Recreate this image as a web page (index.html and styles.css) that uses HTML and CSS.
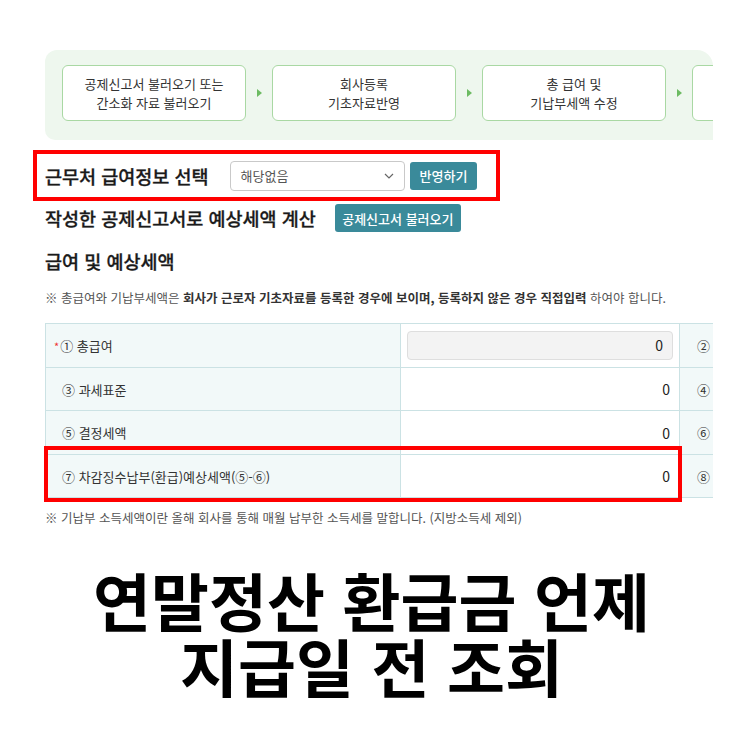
FILE: index.html
```html
<!DOCTYPE html>
<html lang="ko">
<head>
    <meta charset="UTF-8">
    <meta name="viewport" content="width=device-width, initial-scale=1.0">
    <title>연말정산 환급금 언제 지급일 전 조회</title>
    <link rel="stylesheet" href="styles.css">
</head>
<body>
    <div class="shot">
        <div class="steps-wrap">
            <div class="steps">
                <div class="step">공제신고서 불러오기 또는<br>간소화 자료 불러오기</div>
                <span class="arrow"></span>
                <div class="step">회사등록<br>기초자료반영</div>
                <span class="arrow"></span>
                <div class="step">총 급여 및<br>기납부세액 수정</div>
                <span class="arrow"></span>
                <div class="step"></div>
            </div>
        </div>

        <div class="pick">
            <h2 class="heading">근무처 급여정보 선택</h2>
            <div class="select">
                <span>해당없음</span>
                <svg width="10" height="6" viewBox="0 0 10 6"><path d="M1 1l4 4 4-4" fill="none" stroke="#666" stroke-width="1.2"/></svg>
            </div>
            <button class="btn">반영하기</button>
        </div>

        <div class="calc">
            <h2 class="heading">작성한 공제신고서로 예상세액 계산</h2>
            <button class="btn btn-load">공제신고서 불러오기</button>
        </div>

        <h2 class="heading sub">급여 및 예상세액</h2>
        <p class="note">※ 총급여와 기납부세액은 <b>회사가 근로자 기초자료를 등록한 경우에 보이며, 등록하지 않은 경우 직접입력</b> 하여야 합니다.</p>

        <div class="table-wrap">
            <div class="table-clip">
                <table class="tax">
                    <colgroup>
                        <col class="c-label">
                        <col class="c-val">
                        <col class="c-side">
                    </colgroup>
                    <tr>
                        <td class="label first"><span class="req">*</span>① 총급여</td>
                        <td class="val"><div class="input">0</div></td>
                        <td class="label side">②</td>
                    </tr>
                    <tr>
                        <td class="label">③ 과세표준</td>
                        <td class="val">0</td>
                        <td class="label side">④</td>
                    </tr>
                    <tr>
                        <td class="label">⑤ 결정세액</td>
                        <td class="val">0</td>
                        <td class="label side">⑥</td>
                    </tr>
                    <tr>
                        <td class="label">⑦ 차감징수납부(환급)예상세액(⑤-⑥)</td>
                        <td class="val">0</td>
                        <td class="label side">⑧</td>
                    </tr>
                </table>
            </div>
            <div class="mark"></div>
        </div>

        <p class="note after">※ 기납부 소득세액이란 올해 회사를 통해 매월 납부한 소득세를 말합니다. (지방소득세 제외)</p>
    </div>

    <h1 class="title">연말정산 환급금 언제<br>지급일 전 조회</h1>
</body>
</html>
```

FILE: styles.css
```css
body {
    margin: 0;
    background: #fff;
    font-family: "Noto Sans CJK KR", "Noto Sans", sans-serif;
    color: #222;
}
.shot {
    padding: 50px 0 0 45px;
    width: 668px;
}
.steps-wrap {
    height: 90px;
    overflow: hidden;
    background: #eef7ee;
    border-radius: 12px 16px 0 10px;
}
.steps {
    display: flex;
    align-items: center;
    padding: 15px 0 0 17px;
}
.step {
    flex: none;
    width: 182px;
    height: 54px;
    border: 1px solid #a9d8a3;
    border-radius: 6px;
    background: #fff;
    display: flex;
    align-items: center;
    justify-content: center;
    text-align: center;
    font-size: 13px;
    line-height: 19px;
    color: #333;
}
.arrow {
    flex: none;
    width: 26px;
    display: flex;
    justify-content: center;
}
.arrow::before {
    content: "";
    border-left: 5px solid #6cbb62;
    border-top: 4px solid transparent;
    border-bottom: 4px solid transparent;
}
.heading {
    margin: 0;
    font-size: 18.5px;
    font-weight: 500;
    line-height: 22px;
    color: #1a1a1a;
    -webkit-text-stroke: 0.3px #1a1a1a;
}
.pick {
    margin: 10px 0 0 -12px;
    width: 451px;
    height: 43px;
    border: 4px solid #ff0000;
    padding-left: 8px;
    display: flex;
    align-items: center;
}
.select {
    margin-left: 21px;
    width: 153px;
    height: 28px;
    padding: 0 10px;
    border: 1px solid #c9c9c9;
    border-radius: 4px;
    display: flex;
    align-items: center;
    justify-content: space-between;
    font-size: 13px;
    color: #555;
}
.btn {
    margin-left: 5px;
    height: 28px;
    padding: 0 10px;
    border: none;
    border-radius: 3px;
    background: #3a8a9a;
    color: #fff;
    font-family: inherit;
    font-size: 13px;
    font-weight: 500;
}
.calc {
    margin-top: 3px;
    display: flex;
    align-items: center;
}
.btn-load {
    margin-left: 19px;
    height: 28px;
    width: 126px;
    padding: 0;
}
.sub {
    margin-top: 18px;
}
.note {
    margin: 18px 0 0;
    font-size: 12.5px;
    line-height: 16px;
    color: #555;
    white-space: nowrap;
}
.note b {
    color: #333;
    font-weight: 700;
}
.note.after {
    margin-top: 12px;
}
.table-wrap {
    position: relative;
    margin-top: 17px;
}
.table-clip {
    overflow: hidden;
}
.tax {
    border-collapse: collapse;
    width: 740px;
    table-layout: fixed;
}
.c-label {
    width: 355px;
}
.c-val {
    width: 279px;
}
.c-side {
    width: 106px;
}
.tax td {
    height: 42px;
    padding: 0;
    border: 1px solid #cbe2e4;
    font-size: 13px;
}
.tax tr:nth-child(odd) td {
    height: 43px;
}
.tax .label {
    padding-left: 16px;
    background: #f2f9f9;
    color: #333;
}
.tax .label.first {
    padding-left: 8px;
}
.req {
    color: #e33;
    font-size: 11px;
    margin-right: 1px;
}
.tax .val {
    padding-right: 9px;
    text-align: right;
    font-size: 14px;
    color: #222;
}
.tax .side {
    padding-left: 17px;
}
.input {
    margin-left: 6px;
    margin-right: -3px;
    height: 27px;
    line-height: 27px;
    padding-right: 9px;
    background: #f3f3f3;
    border: 1px solid #dedede;
    border-radius: 4px;
}
.mark {
    position: absolute;
    left: -1px;
    top: 123px;
    width: 630px;
    height: 48px;
    border: 4px solid #ff0000;
}
.title {
    margin: 40px 0 0;
    text-align: center;
    font-size: 63px;
    line-height: 66px;
    font-weight: 700;
    color: #000;
}
```
